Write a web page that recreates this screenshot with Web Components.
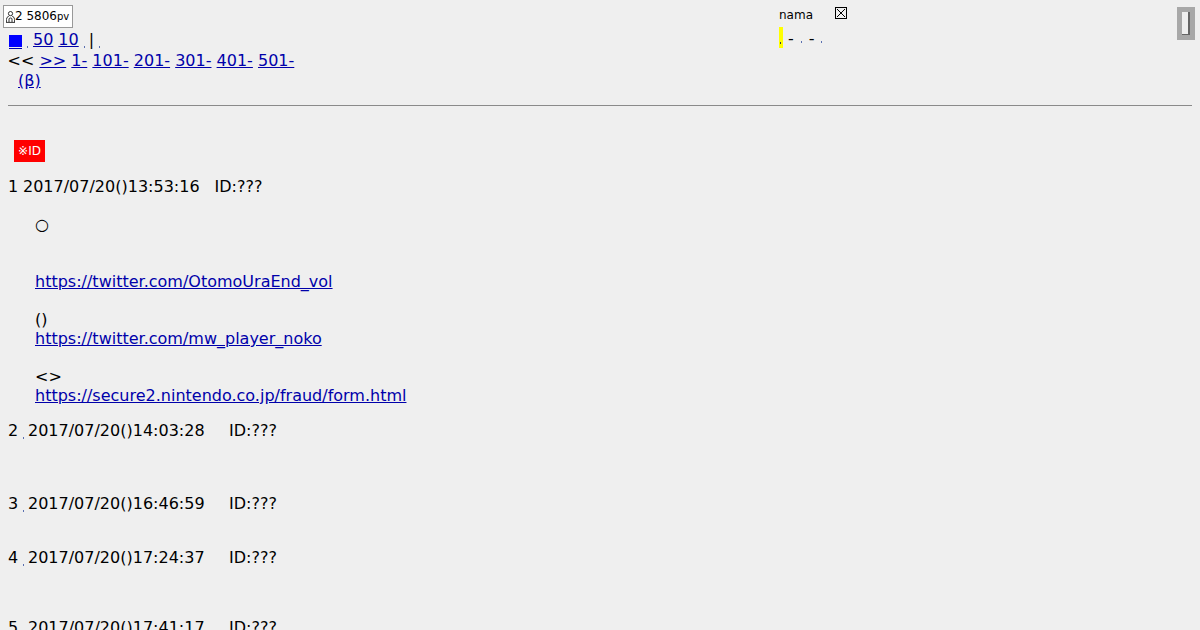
<!DOCTYPE html>
<html><head><meta charset="utf-8">
<style>
html,body{margin:0;height:100%;overflow:hidden}
body{background:#efefef;color:#000;font:16px/19px "DejaVu Sans",sans-serif}
</style></head><body>
<page-head></page-head>
<id-note></id-note>
<thread-post num="1" date="2017/07/20()13:53:16" uid="ID:???" first>
<p class="o">○</p>
<p class="a"><a href="#">https://twitter.com/OtomoUraEnd_vol</a></p>
<p class="b">()<br><a href="#">https://twitter.com/mw_player_noko</a></p>
<p class="b">&lt;&gt;<br><a href="#">https://secure2.nintendo.co.jp/fraud/form.html</a></p>
</thread-post>
<thread-post num="2" date="2017/07/20()14:03:28" uid="ID:???" gap="54"></thread-post>
<thread-post num="3" date="2017/07/20()16:46:59" uid="ID:???" gap="35"></thread-post>
<thread-post num="4" date="2017/07/20()17:24:37" uid="ID:???" gap="51"></thread-post>
<thread-post num="5" date="2017/07/20()17:41:17" uid="ID:???" gap="0"></thread-post>
<script>
class PageHead extends HTMLElement{constructor(){super();this.attachShadow({mode:'open'}).innerHTML=`
<style>
:host{display:block;position:relative;padding:30px 8px 0}
a{color:#00a}
.row{height:20.5px;white-space:pre}
.row.t{height:21px}
.row.f{display:flex;align-items:baseline}
.row.s{margin-left:-.5px}
.i{margin-left:10px}
.dot{display:inline-block;width:1px;height:2px;background:#5a6fb0;align-self:flex-end;margin-bottom:3px}
.sq{margin-left:1px;width:13px;display:inline-block;position:relative;height:16px;border-bottom:1px solid #00a;align-self:flex-end;margin-bottom:2px}
.sq i{position:absolute;left:0;top:3px;width:13px;height:12px;background:#00f}
.badge{position:absolute;left:3px;top:5px;width:68px;height:21px;border:1px solid #999;background:#fff;font-size:12px;line-height:21px;display:flex;align-items:center;white-space:nowrap}
.badge svg{margin-left:2px;flex:none}
.badge small{font-size:10px}
.nama{position:absolute;left:779px;top:8px;font-size:12px;line-height:15px}
.x{position:absolute;left:835px;top:7px;width:12px;height:12px}
.tools{position:absolute;left:779px;top:27px;height:21px;display:flex;align-items:flex-end;line-height:19px;white-space:pre}
.y{display:inline-block;width:4px;height:21px;background:#ff0;position:relative}
.y i{position:absolute;left:1px;bottom:4px;width:1px;height:2px;background:#334}
.tools .dot{margin-bottom:5px}
.scroll{position:absolute;left:1177px;top:7px;width:18px;height:33px;background:#a8a8a8;box-sizing:border-box;padding:5px}
.scroll i{display:block;width:8px;height:23px;background:#efefef;border:1px solid #666;border-width:0 2px 1px 0;box-sizing:border-box}
hr{margin:13px 0 0;border:0;border-top:1px solid #8a8a8a;height:0}
</style>
<div class="badge"><svg width="9" height="12" viewBox="0 0 9 12" fill="none" stroke="#000" stroke-width=".8"><circle cx="4.500" cy="2.600" r="2.100"/><path d="M2.800 5.200Q.4 6 .4 8.500V11M6.200 5.200Q8.600 6 8.600 8.500V11M3 11V8q0-1 1.500-1T6 8v3M0 11.400h9"/></svg><span>2 5806<small>pv</small></span></div>
<div class="row f"><a class="sq" href="#" aria-label="menu"><i></i></a><span class="dot" style="margin-left:5px"></span><a href="#" style="margin-left:5px">50</a><a href="#" style="margin-left:5px">10</a><span class="dot" style="margin-left:5px"></span><span style="margin-left:4px">|</span><span class="dot" style="margin-left:5px"></span></div>
<div class="row s">&lt;&lt; <a href="#">&gt;&gt;</a> <a href="#">1-</a> <a href="#">101-</a> <a href="#">201-</a> <a href="#">301-</a> <a href="#">401-</a> <a href="#">501-</a></div>
<div class="row t i"><a href="#">(β)</a></div>
<hr>
<div class="nama">nama</div>
<svg class="x" viewBox="0 0 12 12" fill="none" stroke="#000"><rect x=".5" y=".5" width="11" height="11"/><path d="M2 2l8 8M10 2l-8 8"/></svg>
<div class="tools"><span class="y"><i></i></span><span style="margin-left:5px">-</span><span class="dot" style="margin-left:7px"></span><span style="margin-left:7px">-</span><span class="dot" style="margin-left:6px"></span></div>
<div class="scroll"><i></i></div>`}}
customElements.define('page-head',PageHead);
class IdNote extends HTMLElement{constructor(){super();this.attachShadow({mode:'open'}).innerHTML=`
<style>:host{display:block;padding:34px 0 0 14px}
span{display:block;width:31px;height:22px;background:#f00;color:#fff;font:12px/22px "DejaVu Sans","Noto Sans CJK JP",sans-serif;text-align:center;overflow:hidden;white-space:nowrap}</style>
<span>※ID</span>`}}
customElements.define('id-note',IdNote);
class ThreadPost extends HTMLElement{constructor(){super();const f=this.hasAttribute('first'),g=this.getAttribute('gap')||0;
this.attachShadow({mode:'open'}).innerHTML=`
<style>:host{display:block;padding:0 8px}
.h{white-space:pre;display:flex;height:19px;margin-top:${f?15:0}px}
.n{width:${f?15:20}px;position:relative}
.n i{position:absolute;left:15px;bottom:1px;width:1px;height:2px;background:#5a6fb0}
.u{margin-left:${f?15:24.5}px}
.b{margin:${f?21:0}px 0 0 27px;min-height:${g}px}
</style>
<div class="h"><span class="n">${this.getAttribute('num')}${f?'':'<i></i>'}</span><span>${this.getAttribute('date')}</span><span class="u">${this.getAttribute('uid')}</span></div>
<div class="b"><slot></slot></div>`}}
customElements.define('thread-post',ThreadPost);
</script>
<style>
thread-post p{margin:0}
thread-post p.o{line-height:15px;margin-bottom:4px}
thread-post p.a{margin-top:40px}
thread-post p.b{margin-top:19px}
thread-post a{color:#00a}
thread-post:first-of-type{margin-bottom:16px}
</style>
</body></html>
